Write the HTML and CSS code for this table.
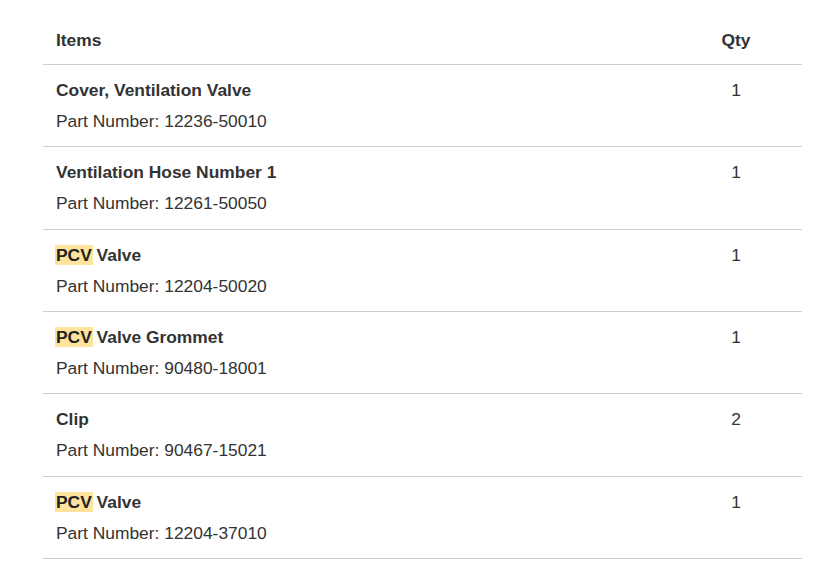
FILE: index.html
```html
<!DOCTYPE html>
<html>
<head>
<meta charset="utf-8">
<link rel="stylesheet" href="styles.css">
</head>
<body>
<table class="parts">
  <thead>
    <tr><th class="items">Items</th><th class="qty">Qty</th></tr>
  </thead>
  <tbody>
    <tr><td class="items"><div class="name">Cover, Ventilation Valve</div><div class="pn">Part Number: 12236-50010</div></td><td class="qty">1</td></tr>
    <tr><td class="items"><div class="name">Ventilation Hose Number 1</div><div class="pn">Part Number: 12261-50050</div></td><td class="qty">1</td></tr>
    <tr><td class="items"><div class="name"><mark>PCV</mark> Valve</div><div class="pn">Part Number: 12204-50020</div></td><td class="qty">1</td></tr>
    <tr><td class="items"><div class="name"><mark>PCV</mark> Valve Grommet</div><div class="pn">Part Number: 90480-18001</div></td><td class="qty">1</td></tr>
    <tr><td class="items"><div class="name">Clip</div><div class="pn">Part Number: 90467-15021</div></td><td class="qty">2</td></tr>
    <tr><td class="items"><div class="name"><mark>PCV</mark> Valve</div><div class="pn">Part Number: 12204-37010</div></td><td class="qty">1</td></tr>
  </tbody>
</table>
</body>
</html>
```
FILE: styles.css
```css
html, body {
  margin: 0;
  padding: 0;
  background: #fff;
}
body {
  font-family: "Liberation Sans", Arial, sans-serif;
  font-size: 17.4px;
  line-height: 24px;
  color: #333;
}
.parts {
  margin-left: 43px;
  width: 759px;
  border-collapse: collapse;
}
.parts th {
  font-weight: bold;
  padding: 28px 13px 12px;
  border-bottom: 1px solid #cfcfcf;
}
.parts td {
  padding: 13px 13px 13.33px;
  border-bottom: 1px solid #cfcfcf;
  vertical-align: top;
}
.parts .items {
  text-align: left;
}
.parts .qty {
  width: 132px;
  padding-left: 0;
  padding-right: 0;
  text-align: center;
}
.name {
  font-weight: bold;
}
.pn {
  margin-top: 7px;
}
mark {
  background: #fde39c;
  color: #222;
  padding: 0 1px;
  margin: 0 -1px;
}
```
